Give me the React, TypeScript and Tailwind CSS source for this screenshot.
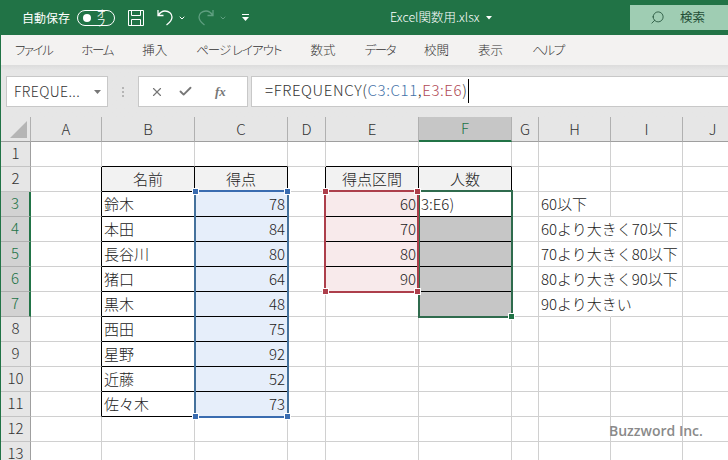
import { Check, ChevronDown, Search, X } from "lucide-react";

const jp = "font-['Noto_Sans_CJK_JP','Noto_Sans',sans-serif]";

const colWidths = ["A", "B", "C", "D", "E", "F", "G", "H", "I", "J"];
const tabs = [
	{ label: "ファイル", cls: "tracking-[-1.5px]" },
	{ label: "ホーム", cls: "tracking-[-1.3px]" },
	{ label: "挿入", cls: "" },
	{ label: "ページ レイアウト", cls: "tracking-[-1px]" },
	{ label: "数式", cls: "" },
	{ label: "データ", cls: "tracking-[-1.5px]" },
	{ label: "校閲", cls: "" },
	{ label: "表示", cls: "" },
	{ label: "ヘルプ", cls: "tracking-[-1.3px]" },
];

const texts: Record<string, { t: string; right?: boolean; center?: boolean }> = {
	B2: { t: "名前", center: true },
	C2: { t: "得点", center: true },
	E2: { t: "得点区間", center: true },
	F2: { t: "人数", center: true },
	B3: { t: "鈴木" },
	B4: { t: "本田" },
	B5: { t: "長谷川" },
	B6: { t: "猪口" },
	B7: { t: "黒木" },
	B8: { t: "西田" },
	B9: { t: "星野" },
	B10: { t: "近藤" },
	B11: { t: "佐々木" },
	C3: { t: "78", right: true },
	C4: { t: "84", right: true },
	C5: { t: "80", right: true },
	C6: { t: "64", right: true },
	C7: { t: "48", right: true },
	C8: { t: "75", right: true },
	C9: { t: "92", right: true },
	C10: { t: "52", right: true },
	C11: { t: "73", right: true },
	E3: { t: "60", right: true },
	E4: { t: "70", right: true },
	E5: { t: "80", right: true },
	E6: { t: "90", right: true },
	F3: { t: "3:E6)" },
	H3: { t: "60以下" },
	H4: { t: "60より大きく70以下" },
	H5: { t: "70より大きく80以下" },
	H6: { t: "80より大きく90以下" },
	H7: { t: "90より大きい" },
};

const inTable = (c: string, r: number) =>
	((c === "B" || c === "C") && r >= 2 && r <= 11) ||
	((c === "E" || c === "F") && r === 2) ||
	(c === "E" && r >= 3 && r <= 6) ||
	(c === "F" && r >= 3 && r <= 7);

function Cell({ c, r }: { c: string; r: number }) {
	const key = c + r;
	const idx = colWidths.indexOf(c);
	const next = colWidths[idx + 1];
	const cell = texts[key];
	const blackRight = inTable(c, r) || (next ? inTable(next, r) : false);
	const blackBottom = inTable(c, r) || inTable(c, r + 1);
	const spills = c === "H" && r >= 4 && r <= 7;
	let bg = "bg-white";
	if ((c === "B" || c === "C" || c === "E" || c === "F") && r === 2) bg = "bg-[#f2f2f2]";
	if (c === "C" && r >= 3 && r <= 11) bg = "bg-[#e6eefa]";
	if (c === "E" && r >= 3 && r <= 6) bg = "bg-[#f8eaeb]";
	if (c === "F" && r >= 4 && r <= 7) bg = "bg-[#c6c6c6]";
	return (
		<div
			className={`relative flex items-center border-r border-b pb-[2px] whitespace-nowrap text-[15px] font-light leading-none text-[#222] ${bg} ${
				blackRight ? "border-r-black" : spills ? "z-10 border-r-transparent" : "border-r-[#d0d0d0]"
			} ${blackBottom ? "border-b-black" : "border-b-[#d0d0d0]"} ${
				cell?.right ? "justify-end pr-[2px]" : cell?.center ? "justify-center" : "pl-[2px]"
			}`}
		>
			{cell?.t}
		</div>
	);
}

function Handle({ className }: { className: string }) {
	return <div className={`absolute h-[7px] w-[7px] border border-white ${className}`} />;
}

function TopBar() {
	return (
		<div className="flex h-[35px] items-center bg-[#217346] text-white">
			<span className="ml-[21px] text-[12px]">自動保存</span>
			<div className="ml-[7px] flex h-[16px] w-[38px] items-center rounded-full border border-white pl-[5px]">
				<div className="h-[8px] w-[8px] rounded-full bg-white" />
				<span className="ml-[6px] text-[9px] leading-none">オフ</span>
			</div>
			<svg className="ml-[13px]" width="16" height="16" viewBox="0 0 16 16" fill="none" stroke="#fff" strokeWidth="1">
				<path d="M.5.5h15v15H.5zM3.5.5v5h9v-5M3.5 15.5v-6h9v6" />
			</svg>
			<svg className="ml-[13px]" width="16" height="17" viewBox="0 0 16 17" fill="none" stroke="#fff" strokeWidth="1.3">
				<path d="M1 1v5.5h5.5M1.4 6.2C3 3.5 5 2 8 2c4 0 7 2.5 7 6 0 3-2 5.5-5.5 8" />
			</svg>
			<ChevronDown className="ml-[5px]" size={8} strokeWidth={3} />
			<svg className="ml-[12px]" width="16" height="17" viewBox="0 0 16 17" fill="none" stroke="#5f9f80" strokeWidth="1.3">
				<path d="M15 1v5.5H9.5M14.6 6.2C13 3.5 11 2 8 2 4 2 1 4.5 1 8c0 3 2 5.500 5.500 8" />
			</svg>
			<ChevronDown className="ml-[5px] text-[#5f9f80]" size={8} strokeWidth={3} />
			<svg className="ml-[15px]" width="7" height="8" viewBox="0 0 7 8" fill="#fff">
				<path d="M0 0h7v1H0zM0 3h7L3.5 7z" />
			</svg>
			<div className="ml-[141px] flex items-center text-[12.5px] font-light">
				<span>Excel関数用.xlsx</span>
				<svg className="ml-[6px]" width="6" height="4" viewBox="0 0 6 4" fill="#fff">
					<path d="M0 0h6L3 3.5z" />
				</svg>
			</div>
			<div className="ml-auto flex h-[25px] w-[98px] items-center bg-[#9fcdb3] pl-[20px] text-[#1f4e36]">
				<Search size={15} strokeWidth={1.3} className="-scale-x-100" />
				<span className="ml-[15px] text-[12.5px]">検索</span>
			</div>
		</div>
	);
}

function Tabs() {
	return (
		<div className="flex h-[30px] items-center gap-[29px] bg-[#f3f2f1] pl-[14px] text-[12.5px] font-light text-[#333] [font-feature-settings:'palt']">
			{tabs.map((tab) => (
				<span key={tab.label} className={tab.cls}>
					{tab.label}
				</span>
			))}
		</div>
	);
}

function FormulaBar() {
	return (
		<div className="flex h-[52px] items-start bg-[#e6e6e6] bg-gradient-to-b from-[#dcdcdc] to-[#e6e6e6] to-[10%] pt-[11px]">
			<div className="ml-[5px] flex h-[31px] w-[102px] items-center border border-[#c8c8c8] bg-white pl-[7px] text-[14px] font-light tracking-[0.4px] text-[#333]">
				<span>FREQUE...</span>
				<svg className="ml-auto mr-[6px]" width="7" height="4" viewBox="0 0 7 4" fill="#777">
					<path d="M0 0h7L3.5 4z" />
				</svg>
			</div>
			<div className="ml-[13px] flex h-[31px] w-[4px] flex-col items-center justify-center gap-[2px]">
				<div className="h-[2px] w-[2px] bg-[#b5b5b5]" />
				<div className="h-[2px] w-[2px] bg-[#b5b5b5]" />
				<div className="h-[2px] w-[2px] bg-[#b5b5b5]" />
			</div>
			<div className="ml-[13px] flex h-[31px] w-[110px] items-center border border-[#c8c8c8] bg-white text-[#777]">
				<X className="ml-[11px]" size={14} strokeWidth={2} />
				<Check className="ml-[14px]" size={15} strokeWidth={3} />
				<span className="ml-[22px] font-['Liberation_Serif',serif] text-[13px] font-bold italic leading-none">fx</span>
			</div>
			<div className="ml-[3px] flex h-[31px] flex-1 items-center border border-[#c8c8c8] border-r-0 bg-white pb-[2px] pl-[13px] text-[15px] font-light tracking-[0.6px] text-[#333]">
				<span>=FREQUENCY(</span>
				<span className="text-[#4472a8]">C3:C11</span>
				<span>,</span>
				<span className="text-[#b04a55]">E3:E6</span>
				<span>)</span>
				<div className="h-[24px] w-[1px] bg-black" />
			</div>
		</div>
	);
}

function Sheet() {
	const rows = Array.from({ length: 13 }, (_, i) => i + 1);
	return (
		<div className="relative flex-1 overflow-hidden">
			<div className="grid grid-cols-[30px_71px_93px_93px_38px_93px_93px_27px_72px_72px_60px] grid-rows-[25px_repeat(13,25px)]">
				<div className="relative border-r border-b border-r-[#b0b0b0] border-b-[#9f9f9f] bg-[#e6e6e6]">
					<svg className="absolute bottom-[3px] right-[3px]" width="17" height="17" viewBox="0 0 17 17" fill="#b5b5b5">
						<path d="M17 0v17H0z" />
					</svg>
				</div>
				{colWidths.map((c) => (
					<div
						key={c}
						className={`flex items-center justify-center border-r border-b text-[15px] font-light ${
							c === "F"
								? "border-r-[#b0b0b0] border-b-2 border-b-[#217346] bg-[#c6c6c6] text-[#217346]"
								: "border-r-[#b0b0b0] border-b-[#9f9f9f] bg-[#e6e6e6] text-[#333]"
						}`}
					>
						{c}
					</div>
				))}
				{rows.map((r) => {
					const active = r >= 3 && r <= 7;
					return [
						<div
							key={`h${r}`}
							className={`flex items-center justify-center border-b pb-[1px] text-[15px] font-light ${
								active
									? "border-r-2 border-b-[#b0b0b0] border-r-[#217346] bg-[#d2d2d2] text-[#217346]"
									: "border-r border-b-[#c4c4c4] border-r-[#9f9f9f] bg-[#e6e6e6] text-[#333]"
							}`}
						>
							{r}
						</div>,
						...colWidths.map((c) => <Cell key={c + r} c={c} r={r} />),
					];
				})}
			</div>

			{/* 参照範囲の枠 */}
			<div className="absolute z-20 left-[193px] top-[73px] h-[228px] w-[95px] border-2 border-x-[#44719c] border-y-[#3a6cb0]">
				<Handle className="-left-[4px] -top-[4px] bg-[#3a6cb0]" />
				<Handle className="-right-[4px] -top-[4px] bg-[#3a6cb0]" />
				<Handle className="-left-[4px] -bottom-[4px] bg-[#3a6cb0]" />
				<Handle className="-right-[4px] -bottom-[4px] bg-[#3a6cb0]" />
			</div>
			<div className="absolute z-20 left-[417px] top-[73px] h-[128px] w-[95px] border-2 border-[#2f6b4d]">
				<Handle className="-right-[4px] -bottom-[4px] bg-[#217346]" />
			</div>
			<div className="absolute z-20 left-[323px] top-[73px] h-[103px] w-[95px] border-2 border-[#ad3f4b]">
				<Handle className="-left-[4px] -top-[4px] bg-[#ad3f4b]" />
				<Handle className="-right-[4px] -top-[4px] bg-[#ad3f4b]" />
				<Handle className="-left-[4px] -bottom-[4px] bg-[#ad3f4b]" />
				<Handle className="-right-[4px] -bottom-[4px] bg-[#ad3f4b]" />
			</div>

			<div className="absolute z-20 left-[608px] top-[303px] font-['Open_Sans',sans-serif] text-[14px] font-semibold text-[#8a8a8a]">
				Buzzword Inc.
			</div>
		</div>
	);
}

export default function App() {
	return (
		<div className={`relative flex h-[460px] w-[728px] flex-col overflow-hidden border-l border-l-[#217346] bg-white ${jp}`}>
			<TopBar />
			<Tabs />
			<FormulaBar />
			<Sheet />
		</div>
	);
}
